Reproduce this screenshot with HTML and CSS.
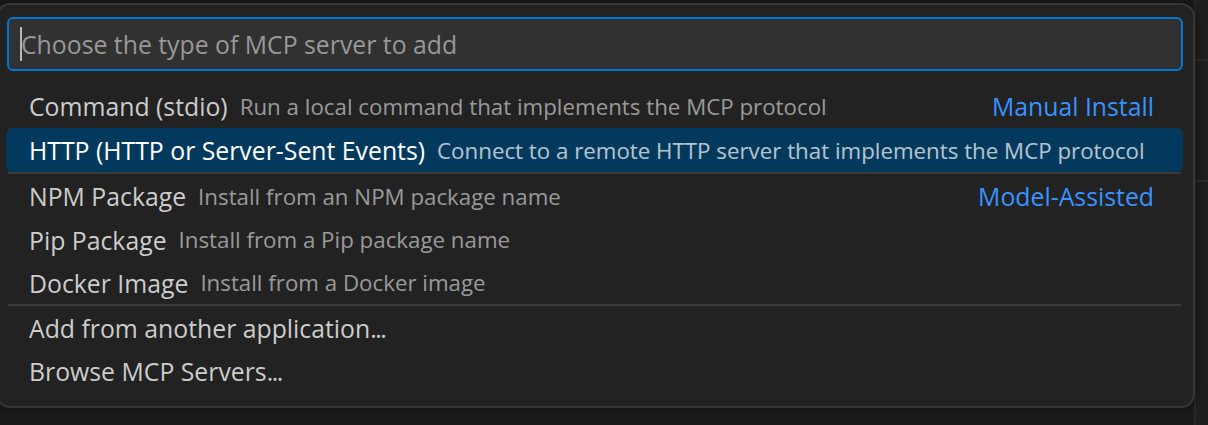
FILE: index.html
```html
<!DOCTYPE html>
<html lang="en">
<head>
<meta charset="utf-8">
<title>Add MCP server</title>
<link rel="stylesheet" href="styles.css">
</head>
<body>
<div class="workbench">
  <div class="edge">
    <div class="edge-line first"></div>
    <div class="edge-line second"></div>
  </div>
</div>
<div class="quick-input">
  <div class="input-box">
    <span class="caret"></span>
    <span class="placeholder">Choose the type of MCP server to add</span>
  </div>
  <div class="list">
    <div class="row">
      <span class="label">Command (stdio)</span>
      <span class="desc">Run a local command that implements the MCP protocol</span>
      <span class="group">Manual Install</span>
    </div>
    <div class="row selected">
      <span class="label">HTTP (HTTP or Server-Sent Events)</span>
      <span class="desc">Connect to a remote HTTP server that implements the MCP protocol</span>
    </div>
    <div class="row sep">
      <span class="label">NPM Package</span>
      <span class="desc">Install from an NPM package name</span>
      <span class="group">Model-Assisted</span>
    </div>
    <div class="row compact">
      <span class="label">Pip Package</span>
      <span class="desc">Install from a Pip package name</span>
    </div>
    <div class="row compact">
      <span class="label">Docker Image</span>
      <span class="desc">Install from a Docker image</span>
    </div>
    <div class="row sep">
      <span class="label">Add from another application<span class="dots">...</span></span>
    </div>
    <div class="row tight">
      <span class="label">Browse MCP Servers<span class="dots">...</span></span>
    </div>
  </div>
</div>
</body>
</html>
```

FILE: styles.css
```css
html, body {
  margin: 0;
  padding: 0;
}

body {
  width: 1208px;
  height: 425px;
  overflow: hidden;
  background: #1b1b1b;
  font-family: "Open Sans", "Noto Sans", sans-serif;
  position: relative;
}

.workbench {
  height: 425px;
  display: flex;
  justify-content: flex-end;
}

.edge {
  width: 12px;
  background: #1f1f1f;
  border-left: 2px solid #2a2a2a;
  display: flex;
  flex-direction: column;
}

.edge-line {
  height: 2px;
  background: #2c2c2c;
}

.edge-line.first {
  margin-top: 59px;
}

.edge-line.second {
  margin-top: 119px;
}

.quick-input {
  position: absolute;
  left: -4px;
  top: 3px;
  width: 1199px;
  height: 405px;
  box-sizing: border-box;
  background: #222222;
  border: 2px solid #363636;
  border-radius: 14px;
  box-shadow: 0 0 8px 2px rgba(0, 0, 0, 0.36);
  display: flex;
  flex-direction: column;
}

.input-box {
  position: relative;
  margin: 12px 10px 0 9px;
  height: 54px;
  box-sizing: border-box;
  background: #313131;
  border: 2px solid #0078d4;
  border-radius: 6px;
  padding-left: 12px;
  display: flex;
  align-items: center;
  font-size: 24.8px;
}

.placeholder {
  color: #989898;
}

.caret {
  position: absolute;
  left: 11px;
  top: 8px;
  width: 2px;
  height: 34px;
  background: #b8b8b8;
}

.list {
  margin: 13px 10px 0 8px;
  display: flex;
  flex-direction: column;
}

.row {
  position: relative;
  height: 44px;
  box-sizing: border-box;
  padding: 0 29px 0 23px;
  display: flex;
  align-items: center;
  border-radius: 6px;
  font-size: 24.8px;
  color: #cccccc;
  white-space: nowrap;
}

.row.compact {
  height: 43px;
}

.row.tight {
  height: 42px;
}

.row.sep {
  height: 46px;
  padding-top: 2px;
  border-radius: 0;
}

.row.sep::before {
  content: "";
  position: absolute;
  left: 2px;
  right: 2px;
  top: 0;
  height: 2px;
  background: #3a3a3a;
}

.label {
  flex: none;
}

.dots {
  letter-spacing: -1.5px;
}

.desc {
  margin-left: 12px;
  font-size: 22.3px;
  color: #cccccc;
  opacity: 0.7;
}

.group {
  margin-left: auto;
  color: #3794ff;
}

.row.selected {
  background: #04395e;
  color: #ffffff;
}

.row.selected .desc {
  color: #ffffff;
}
```
